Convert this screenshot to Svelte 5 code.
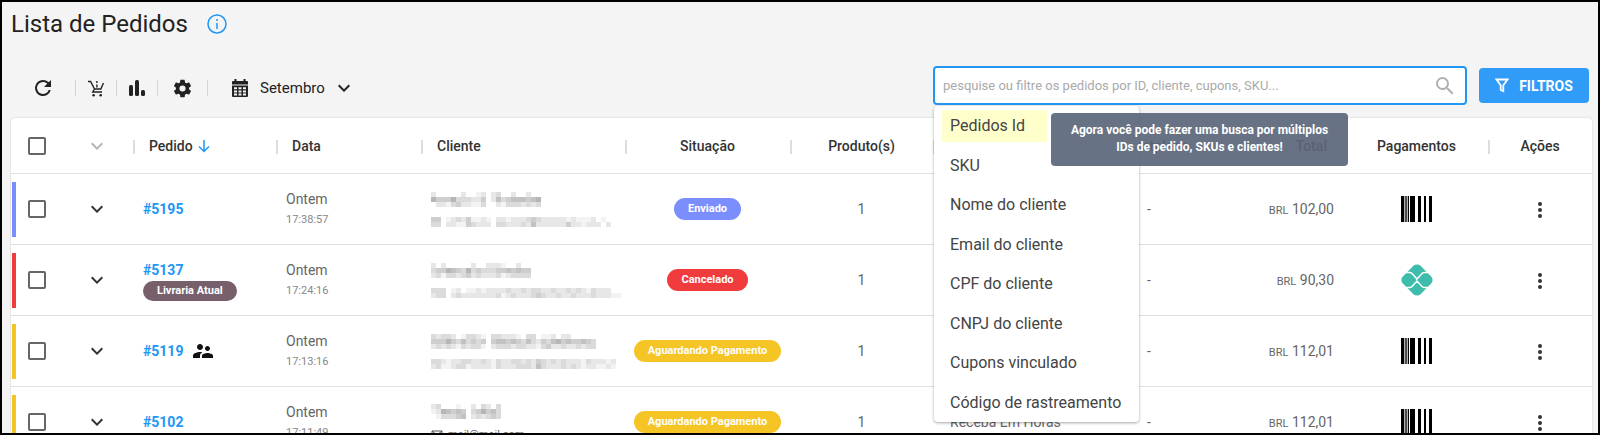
<script>
  let search = $state("");
  let month = $state("Setembro");

  const months = ["Julho", "Agosto", "Setembro"];

  const filters = [
    "Pedidos Id",
    "SKU",
    "Nome do cliente",
    "Email do cliente",
    "CPF do cliente",
    "CNPJ do cliente",
    "Cupons vinculado",
    "Código de rastreamento",
  ];

  // client names are masked: each digit is how dark a tile is
  const orders = [
    {
      id: "#5195", time: "17:38:57", status: "Enviado", tone: "sent", total: "102,00", pay: "barcode",
      name: ["20000020012023002002000", "64446333224025345554560", "02213422113002133323230"],
      mail: ["440123241121022122234322222121112010", "330221143222033222325222222422122202"],
    },
    {
      id: "#5137", tag: "Livraria Atual", time: "17:24:16", status: "Cancelado", tone: "canceled", total: "90,30", pay: "pix",
      name: ["20200000200222100200", "34465436343334454544", "23133234232223123333"],
      mail: ["33301201121222232232332232232321322200", "23302322222223123222343223223222322211"],
    },
    {
      id: "#5119", shared: true, time: "17:13:16", status: "Aguardando Pagamento", tone: "waiting", total: "112,01", pay: "barcode",
      name: ["323320133210332221033011202200000", "444643534340455454353243564544543", "232321323310233323322134223223233"],
      mail: ["3321223322321322332324323232221322212", "2311233122221322233325322232321221121"],
    },
    {
      id: "#5102", time: "17:11:49", status: "Aguardando Pagamento", tone: "waiting", total: "112,01", pay: "barcode",
      shipping: "Receba Em Horas", email: "mail@mail.com",
      name: ["23000100203203", "12654540346453", "01333450232343"],
    },
  ];
</script>

{#snippet chevron()}
  <svg width="24" height="24" viewBox="0 0 24 24"><path d="M16.6 8.6 12 13.2 7.4 8.6 6 10l6 6 6-6z" /></svg>
{/snippet}

{#snippet mosaic(rows)}
  <svg width={rows[0].length * 5} height={rows.length * 5} shape-rendering="crispEdges" aria-hidden="true">
    {#each rows as row, y}
      {#each row as tone, x}
        <rect x={x * 5} y={y * 5} width="5" height="5" fill-opacity={tone * 0.055} />
      {/each}
    {/each}
  </svg>
{/snippet}

<div class="page">
  <div class="title">
    <h1>Lista de Pedidos</h1>
    <svg class="info" width="20" height="20" viewBox="0 0 20 20">
      <circle cx="10" cy="10" r="9" fill="none" stroke-width="1.5" />
      <path d="M10 9v6M10 5v2" stroke-width="1.5" />
    </svg>
  </div>

  <div class="toolbar">
    <button class="tool first" aria-label="Atualizar">
      <svg width="24" height="24" viewBox="0 0 24 24"><path d="M17.65 6.35A7.96 7.96 0 0 0 12 4a8 8 0 1 0 7.73 10h-2.08A6 6 0 1 1 12 6c1.66 0 3.14.69 4.22 1.78L13 11h7V4z" /></svg>
    </button>
    <button class="tool" aria-label="Carrinhos">
      <svg class="line" width="16" height="17" viewBox="0 0 16 17">
        <path d="M0 1.5h2.6L6.5 9h6.3l2.7-6M6.5 9l-1.8 3H14M8.9 1v2M8.9 4.5v3" stroke-width="1.4" />
        <circle cx="5.6" cy="15.2" r="1.3" /><circle cx="12.7" cy="15.2" r="1.3" />
      </svg>
    </button>
    <button class="tool" aria-label="Relatórios">
      <svg width="16" height="16" viewBox="0 0 16 16">
        <rect x="0" y="5" width="4" height="11" rx="1.5" /><rect x="6" y="0" width="4" height="16" rx="1.5" /><rect x="12" y="10" width="4" height="6" rx="1.5" />
      </svg>
    </button>
    <button class="tool wide" aria-label="Configurações">
      <svg width="21" height="21" viewBox="0 0 24 24"><path d="M19.43 12.98c.04-.32.07-.64.07-.98s-.03-.66-.07-.98l2.11-1.65c.19-.15.24-.42.12-.64l-2-3.46c-.12-.22-.39-.3-.61-.22l-2.49 1c-.52-.4-1.08-.73-1.69-.98l-.38-2.65A.49.49 0 0 0 14 2h-4c-.25 0-.46.18-.49.42l-.38 2.65c-.61.25-1.17.59-1.69.98l-2.49-1c-.23-.09-.49 0-.61.22l-2 3.46c-.13.22-.07.49.12.64l2.11 1.65c-.04.32-.07.65-.07.98s.03.66.07.98l-2.11 1.65c-.19.15-.24.42-.12.64l2 3.46c.12.22.39.3.61.22l2.49-1c.52.4 1.08.73 1.69.98l.38 2.65c.03.24.24.42.49.42h4c.25 0 .46-.18.49-.42l.38-2.65c.61-.25 1.17-.59 1.69-.98l2.49 1c.23.09.49 0 .61-.22l2-3.46c.12-.22.07-.49-.12-.64zM12 15.5a3.5 3.5 0 1 1 0-7 3.5 3.5 0 0 1 0 7z" /></svg>
    </button>
    <label class="period">
      <svg width="16" height="18" viewBox="0 0 16 18">
        <path fill-rule="evenodd" d="M2.5 0h2v2h7V0h2v2H15a1 1 0 0 1 1 1v2.5H0V3a1 1 0 0 1 1-1h1.5zM0 6.5h16V17a1 1 0 0 1-1 1H1a1 1 0 0 1-1-1zM2 8.2v2h3v-2zM6.5 8.2v2h3v-2zM11 8.2v2h3v-2zM2 11.4v2h3v-2zM6.5 11.4v2h3v-2zM11 11.4v2h3v-2zM2 14.5v2h3v-2zM6.5 14.5v2h3v-2zM11 14.5v2h3v-2z" />
      </svg>
      <select bind:value={month} aria-label="Período">
        {#each months as m}
          <option>{m}</option>
        {/each}
      </select>
      {@render chevron()}
    </label>

    <div class="search">
      <input type="text" bind:value={search} aria-label="Pesquisar pedidos" placeholder="pesquise ou filtre os pedidos por ID, cliente, cupons, SKU..." />
      <svg width="24" height="24" viewBox="0 0 24 24"><path d="M15.5 14h-.79l-.28-.27A6.47 6.47 0 0 0 16 9.5 6.5 6.5 0 1 0 9.5 16c1.61 0 3.09-.59 4.23-1.57l.27.28v.79l5 4.99L20.49 19zm-6 0a4.5 4.5 0 1 1 0-9 4.5 4.5 0 0 1 0 9z" /></svg>

      <ul class="menu">
        {#each filters as filter, i}
          <li><button class:highlight={i === 0}>{filter}</button></li>
        {/each}
      </ul>
      <div class="tooltip" role="tooltip">Agora você pode fazer uma busca por múltiplos<br />IDs de pedido, SKUs e clientes!</div>
    </div>

    <button class="filter-btn">
      <svg width="14" height="15" viewBox="0 0 14 15"><path d="M1.5 1.5h11L8.3 7.2v6L5.7 12V7.2z" stroke-width="1.8" /></svg>
      FILTROS
    </button>
  </div>

  <div class="card">
    <table>
      <colgroup>
        <col class="c-check" /><col class="c-expand" /><col class="c-order" /><col class="c-date" /><col class="c-client" />
        <col class="c-status" /><col class="c-items" /><col class="c-ship" /><col class="c-market" />
        <col class="c-total" /><col class="c-pay" /><col class="c-actions" />
      </colgroup>
      <thead>
        <tr>
          <th class="check"><input type="checkbox" aria-label="Selecionar todos" /></th>
          <th class="center muted">{@render chevron()}</th>
          <th class="sep">
            Pedido
            <svg class="sort" width="12" height="13" viewBox="0 0 12 13"><path d="M6 0v11.5M1 6.5l5 5 5-5" stroke-width="1.5" /></svg>
          </th>
          <th class="sep">Data</th>
          <th class="sep">Cliente</th>
          <th class="sep center">Situação</th>
          <th class="sep center">Produto(s)</th>
          <th class="sep center">Envio</th>
          <th class="sep center">Marketplace</th>
          <th class="sep right">Total</th>
          <th class="center">Pagamentos</th>
          <th class="sep center">Ações</th>
        </tr>
      </thead>
      <tbody>
        {#each orders as order}
          <tr>
            <td class="check {order.tone}"><input type="checkbox" aria-label="Selecionar {order.id}" /></td>
            <td class="center"><button class="icon" aria-label="Expandir">{@render chevron()}</button></td>
            <td>
              <div class="order">
                <a href="#{order.time}">{order.id}</a>
                {#if order.shared}
                  <svg width="24" height="24" viewBox="0 0 24 24"><path d="M16.5 12c1.38 0 2.49-1.12 2.49-2.5S17.88 7 16.5 7 14 8.12 14 9.5s1.12 2.5 2.5 2.5zM9 11c1.66 0 2.99-1.34 2.99-3S10.66 5 9 5 6 6.34 6 8s1.34 3 3 3zm7.5 3c-1.83 0-5.5.92-5.5 2.75V19h11v-2.25c0-1.83-3.67-2.75-5.5-2.75zM9 13c-2.33 0-7 1.17-7 3.5V19h7v-2.25c0-.85.33-2.34 2.37-3.47C10.5 13.1 9.66 13 9 13z" /></svg>
                {/if}
              </div>
              {#if order.tag}
                <span class="pill tag">{order.tag}</span>
              {/if}
            </td>
            <td>
              <div class="day">Ontem</div>
              <div class="time">{order.time}</div>
            </td>
            <td>
              <div class="client">
                {@render mosaic(order.name)}
                {#if order.mail}
                  {@render mosaic(order.mail)}
                {:else}
                  <span class="email">
                    <svg width="12" height="10" viewBox="0 0 12 10"><path d="M1 1h10v8H1zl5 4 5-4" /></svg>
                    {order.email}
                  </span>
                {/if}
              </div>
            </td>
            <td class="center"><span class="pill {order.tone}">{order.status}</span></td>
            <td class="center">1</td>
            <td class="ship">{order.shipping ?? ""}</td>
            <td class="center">-</td>
            <td class="right"><small>BRL</small> {order.total}</td>
            <td class="center">
              {#if order.pay === "pix"}
                <svg class="pix" width="32" height="32" viewBox="0 0 32 32">
                  <rect x="3.5" y="3.5" width="25" height="25" rx="5" transform="rotate(45 16 16)" />
                  <path d="M4 8.5h4.500c1 0 1.800.3 2.500 1l5 5.500q-1 1 0 0l5-5.500c.7-.7 1.500-1 2.500-1H28M4 23.500h4.500c1 0 1.800-.3 2.500-1l5-5.500 5 5.500c.7.7 1.500 1 2.500 1H28" />
                </svg>
              {:else}
                <svg class="bars" width="31" height="26" viewBox="0 0 31 26"><path d="M0 0h3v26H0zM3.7 0h1v26h-1zM5.3 0h1v26h-1zM7 0h1v26H7zM9 0h5v26H9zM17 0h3v26h-3zM23 0h2v26h-2zM28 0h3v26h-3z" /></svg>
              {/if}
            </td>
            <td class="center">
              <button class="icon" aria-label="Ações">
                <svg width="4" height="16" viewBox="0 0 4 16"><circle cx="2" cy="2" r="2" /><circle cx="2" cy="8" r="2" /><circle cx="2" cy="14" r="2" /></svg>
              </button>
            </td>
          </tr>
        {/each}
      </tbody>
    </table>
  </div>
</div>

<style>
:global(body) {
  margin: 0;
}

.page {
  box-sizing: border-box;
  height: 100vh;
  overflow: hidden;
  padding: 8px 6px 0 9px;
  border: 2px solid #000;
  background: #f4f4f4;
  color: #222;
  font-family: Roboto, "Liberation Sans", sans-serif;
  font-size: 14px;
}

button, input, select {
  font: inherit;
  color: inherit;
}

button {
  padding: 0;
  border: 0;
  background: none;
  cursor: pointer;
}

svg {
  flex: none;
  fill: #222;
}

.title {
  display: flex;
  align-items: center;
  gap: 19px;
  height: 28px;
}

h1 {
  margin: 0;
  font-size: 24px;
  font-weight: 400;
}

.info {
  stroke: #2196f3;
}

/* Toolbar */
.toolbar {
  display: flex;
  align-items: center;
  height: 44px;
  margin-top: 28px;
  padding-right: 3px;
}

.tool {
  display: flex;
  align-items: center;
  justify-content: center;
  box-sizing: border-box;
  width: 41px;
  height: 16px;
  border-right: 1px solid #d4d4d4;
}

.tool.first {
  width: 65px;
}

.tool.wide {
  width: 50px;
}

.line path {
  fill: none;
  stroke: #222;
}

.period {
  display: flex;
  align-items: center;
  margin-left: 24px;
}

select {
  width: 72px;
  margin-left: 12px;
  padding: 0;
  border: 0;
  appearance: none;
  background: none;
  font-size: 15px;
}

.search {
  position: relative;
  display: flex;
  align-self: flex-start;
  align-items: center;
  box-sizing: border-box;
  width: 534px;
  height: 39px;
  margin-left: auto;
  padding: 0 8px;
  border: 2px solid #2196f3;
  border-radius: 4px;
  background: #fff;
}

.search input {
  flex: 1;
  padding: 0;
  border: 0;
  outline: 0;
  background: none;
  font-size: 13px;
}

.search input::placeholder {
  color: #aaa;
}

.search > svg {
  fill: #b0b0b0;
}

.menu {
  position: absolute;
  top: 38px;
  left: -1px;
  z-index: 1;
  display: flex;
  flex-direction: column;
  box-sizing: border-box;
  width: 205px;
  height: 316px;
  margin: 0;
  padding: 0 8px;
  border-radius: 4px;
  background: #fff;
  box-shadow: 0 1px 3px rgba(0, 0, 0, 0.35);
  list-style: none;
}

.menu li {
  display: flex;
  flex: 1;
  align-items: center;
}

.menu button {
  height: 32px;
  padding: 0 8px;
  color: #444;
  font-size: 16px;
  white-space: nowrap;
}

.menu .highlight {
  width: 105px;
  background: #ffffcc;
  text-align: left;
}

.tooltip {
  position: absolute;
  top: 45px;
  left: 116px;
  z-index: 2;
  box-sizing: border-box;
  width: 297px;
  padding: 9px 0 10px;
  border-radius: 4px;
  background: rgba(91, 102, 123, 0.92);
  color: #fff;
  font-size: 12px;
  font-weight: 700;
  line-height: 17px;
  text-align: center;
}

.filter-btn {
  display: flex;
  align-self: flex-start;
  align-items: center;
  justify-content: center;
  gap: 10px;
  width: 110px;
  height: 35px;
  margin: 2px 0 0 12px;
  border-radius: 4px;
  background: #309cf8;
  color: #fff;
  font-size: 14px;
  font-weight: 700;
}

.filter-btn path {
  fill: none;
  stroke: #fff;
}

/* Table */
.card {
  margin-top: 8px;
  border-radius: 4px 4px 0 0;
  background: #fff;
  box-shadow: 0 0 2px rgba(0, 0, 0, 0.2);
}

table {
  width: 100%;
  table-layout: fixed;
  border-collapse: separate;
  border-spacing: 0;
}

.c-check { width: 49px; }
.c-expand { width: 73px; }
.c-order { width: 143px; }
.c-date { width: 145px; }
.c-status { width: 165px; }
.c-items { width: 143px; }
.c-ship { width: 144px; }
.c-market { width: 144px; }
.c-total { width: 124px; }
.c-pay { width: 143px; }
.c-actions { width: 104px; }

th, td {
  box-sizing: border-box;
  border-bottom: 1px solid #e0e0e0;
  text-align: left;
  white-space: nowrap;
}

th {
  height: 56px;
  padding: 0 16px;
  color: #333;
  font-weight: 500;
}

td {
  height: 71px;
  padding: 0 10px;
  color: #666;
}

.sep {
  background: linear-gradient(#ddd, #ddd) no-repeat 0 22px / 2px 14px;
}

.center {
  padding: 0;
  text-align: center;
}

.right {
  padding: 0 18px 0 0;
  text-align: right;
}

td.right {
  padding-right: 11px;
}

th svg, td svg {
  vertical-align: middle;
}

.muted svg {
  fill: #b5b5b5;
}

.sort {
  margin-left: 2px;
  fill: none;
  stroke: #2196f3;
}

.check {
  padding: 0 0 0 17px;
}

td.check {
  background: linear-gradient(var(--tone), var(--tone)) no-repeat 1px 8px / 4px 55px;
}

.check input {
  display: block;
  box-sizing: border-box;
  width: 18px;
  height: 18px;
  margin: 0;
  appearance: none;
  border: 2px solid #666;
  border-radius: 2px;
}

.sent { --tone: #7b8efd; }
.canceled { --tone: #f03c3c; }
.waiting { --tone: #f5c425; }

.icon svg {
  fill: #333;
}

.order {
  display: flex;
  align-items: center;
  gap: 8px;
  height: 22px;
}

.order svg {
  fill: #111;
}

a {
  color: #2196f3;
  font-weight: 700;
  text-decoration: none;
}

.pill {
  display: inline-block;
  padding: 0 14px;
  border-radius: 11px;
  background: var(--tone);
  color: #fff;
  font-size: 11px;
  font-weight: 700;
  line-height: 22px;
}

.tag {
  --tone: #775f6b;
  display: table;
  line-height: 20px;
}

.day {
  line-height: 22px;
}

.time {
  color: #888;
  font-size: 11px;
  line-height: 20px;
}

.client {
  display: flex;
  flex-direction: column;
  gap: 10px;
}

.email {
  display: flex;
  align-items: center;
  gap: 5px;
  font-size: 11px;
  line-height: 12px;
}

.email path {
  fill: none;
  stroke: #555;
}

.ship {
  padding-left: 17px;
}

small {
  font-size: 11px;
}

.pix {
  fill: #3ebdac;
}

.pix path {
  fill: none;
  stroke: #fff;
  stroke-width: 1.5;
}

.bars {
  fill: #000;
}
</style>
